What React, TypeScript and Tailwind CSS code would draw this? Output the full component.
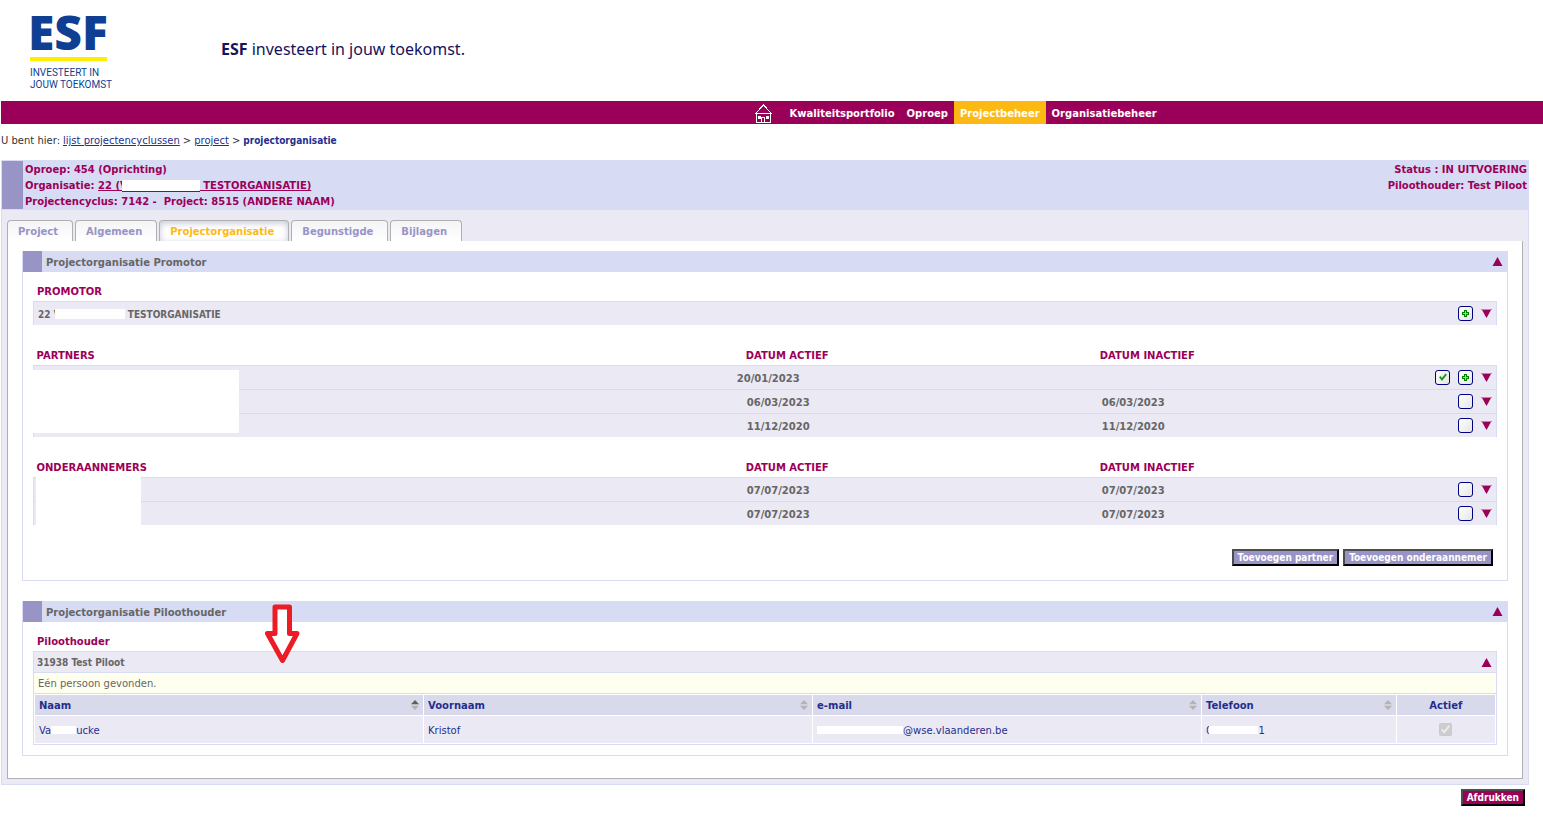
import { useState } from 'react'
import type { ReactNode } from 'react'

const navItems = ['Kwaliteitsportfolio', 'Oproep', 'Projectbeheer', 'Organisatiebeheer']
const tabs = ['Project', 'Algemeen', 'Projectorganisatie', 'Begunstigde', 'Bijlagen']

type Row = { active: string; inactive?: string; checked?: boolean; plus?: boolean; outdent?: boolean }

const partners: Row[] = [
  { active: '20/01/2023', checked: true, plus: true, outdent: true },
  { active: '06/03/2023', inactive: '06/03/2023' },
  { active: '11/12/2020', inactive: '11/12/2020' },
]

const subcontractors: Row[] = [
  { active: '07/07/2023', inactive: '07/07/2023' },
  { active: '07/07/2023', inactive: '07/07/2023' },
]

function HomeIcon() {
  return (
    <svg width="17" height="20" viewBox="0 0 17 20" fill="none" stroke="#fff" shapeRendering="crispEdges">
      <path d="M0.5 9.5 L8.5 1 L16.5 9.5 Z" />
      <path d="M1.5 10v8.5h14V10" />
      <path d="M6.5 18v-4.5h3V18" />
      <path d="M3 12h3v3H3zM11 12h3v3h-3z" fill="#fff" stroke="none" />
    </svg>
  )
}

function Triangle({ up }: { up?: boolean }) {
  return (
    <svg width="11" height="9" viewBox="0 0 11 9" className="block">
      {up ? (
        <path d="M5.5 0 L10.5 9 H0.5 Z" fill="#9b0058" />
      ) : (
        <>
          <path d="M0.5 0 H10.5 L5.5 9 Z" fill="#9b0058" />
          <path d="M0 0.5h11" stroke="#c77fab" />
        </>
      )}
    </svg>
  )
}

function ToggleButton({ up, label }: { up?: boolean; label: string }) {
  return (
    <button type="button" aria-label={label} className="cursor-pointer">
      <Triangle up={up} />
    </button>
  )
}

function IconButton({ label, children }: { label: string; children?: ReactNode }) {
  return (
    <button
      type="button"
      aria-label={label}
      className="flex h-[15px] w-[15px] items-center justify-center rounded-[3px] border border-[#000080] bg-gradient-to-br from-white to-[#e6e6e0]"
    >
      {children}
    </button>
  )
}

function PlusIcon() {
  return (
    <svg width="7" height="7" viewBox="0 0 7 7" shapeRendering="crispEdges">
      <path d="M2 0h3v2h2v3H5v2H2V5H0V2h2z" fill="#008000" />
      <path d="M3 1h1v2h2v1H4v2H3V4H1V3h2z" fill="#a5e04c" />
    </svg>
  )
}

function CheckIcon() {
  return (
    <svg width="8" height="8" viewBox="0 0 8 8">
      <path d="M0.8 3.6 L3 6.4 L7.2 1.2" fill="none" stroke="#1f9a1f" strokeWidth="1.9" />
    </svg>
  )
}

function SortIcon({ sorted }: { sorted?: boolean }) {
  return (
    <svg width="8" height="10" viewBox="0 0 8 10" className="block">
      <path d="M4 0 L8 4.2 H0 Z" fill={sorted ? '#5f6056' : '#b3b3b3'} />
      <path d="M0 5.8 H8 L4 10 Z" fill="#b3b3b3" />
    </svg>
  )
}

function ActionButton({ children, className }: { children: ReactNode; className: string }) {
  return (
    <button
      type="button"
      className={`h-[17px] border-2 border-t-[#4c4c4c] border-r-black border-b-black border-l-[#4c4c4c] px-1 font-['DejaVu_Sans_Condensed','DejaVu_Sans',sans-serif] leading-3 font-bold text-white ${className}`}
    >
      {children}
    </button>
  )
}

function Panel({ title, children }: { title: string; children: ReactNode }) {
  return (
    <section className="relative border border-[#d7dbf4] bg-white">
      <div className="-mt-px flex h-[21px] items-center bg-[#d7dbf4] pr-1">
        <div className="h-full w-[19px] bg-[#9894c6]" />
        <h2 className="flex-1 pt-0.5 pl-1 font-bold text-[#666]">{title}</h2>
        <ToggleButton up label={`${title} inklappen`} />
      </div>
      <div className="px-[10px] pt-[9px]">{children}</div>
    </section>
  )
}

function OrganisationTable({ title, rows }: { title: string; rows: Row[] }) {
  return (
    <table className="w-full table-fixed border-collapse">
      <thead>
        <tr className="h-5 text-left text-[#9b0058]">
          <th className="w-[48%] pt-0.5 pl-[3px]">{title}</th>
          <th className="w-[24.2%] pt-0.5 pl-[10px]">DATUM ACTIEF</th>
          <th className="pt-0.5 pl-[10px]">DATUM INACTIEF</th>
        </tr>
      </thead>
      <tbody className="border-x border-[#d7dbf4]">
        {rows.map((row, i) => (
          <tr key={i} className="h-6 border-t border-[#d7dbf4] bg-[#ebe9f4] font-bold text-[#666]">
            <td />
            <td className={`pt-1 ${row.outdent ? 'pl-px' : 'pl-[11px]'}`}>{row.active}</td>
            <td className="pl-3">
              <div className="flex items-center justify-between">
                <span className="pt-1">{row.inactive}</span>
                <div className="flex items-center gap-2 pr-1">
                  {row.checked && (
                    <IconButton label="Actief">
                      <CheckIcon />
                    </IconButton>
                  )}
                  <IconButton label={row.plus ? 'Toevoegen' : 'Selecteren'}>{row.plus && <PlusIcon />}</IconButton>
                  <ToggleButton label="Uitklappen" />
                </div>
              </div>
            </td>
          </tr>
        ))}
      </tbody>
    </table>
  )
}

export default function App() {
  const [activeTab, setActiveTab] = useState('Projectorganisatie')

  return (
    <div className="min-h-screen bg-white pl-px font-['DejaVu_Sans',Verdana,sans-serif] text-[10px] leading-4 text-[#333]">
      <header className="flex h-[101px] pl-[29px]">
        <div className="w-[191px] pt-3 text-[#0f3f93]">
          <div className="w-[77px] border-b-4 border-[#ffed00] pb-[6px] font-['Open_Sans',sans-serif] text-[48px] leading-[39px] font-extrabold">
            <span className="-ml-0.5">ESF</span>
          </div>
          <p className="pt-[6px] font-[Roboto,sans-serif] leading-3">
            INVESTEERT IN
            <br />
            JOUW TOEKOMST
          </p>
        </div>
        <p className="pt-[37px] font-['Noto_Sans',sans-serif] text-base leading-6 text-[#15125c]">
          <b>ESF</b> investeert in jouw toekomst.
        </p>
      </header>

      <nav className="flex h-[23px] bg-[#9b0058] pl-[49%] font-bold text-white">
        <a href="#home" aria-label="Home" className="-ml-0.5 mr-2 flex items-center pt-0.5 pr-1">
          <HomeIcon />
        </a>
        {navItems.map((item) => (
          <a
            key={item}
            href={`#${item}`}
            className={`flex items-center px-[6px] pt-0.5 ${item === 'Projectbeheer' ? 'bg-[#fdb913]' : ''}`}
          >
            {item}
          </a>
        ))}
      </nav>

      <div className="flex h-9 gap-[3px] pt-[9px]">
        <span>U bent hier:</span>
        <a href="#lijst" className="text-[#1f2f8f] underline">lijst projectencyclussen</a>
        <span>&gt;</span>
        <a href="#project" className="text-[#1f2f8f] underline">project</a>
        <span>&gt;</span>
        <b className="font-['DejaVu_Sans_Condensed','DejaVu_Sans',sans-serif] text-[#1f2f8f]">projectorganisatie</b>
      </div>

      <main className="mr-[14px]">
        <div className="border border-[#d7dbf4] bg-[#ebe9f4]">
          <div className="flex bg-[#d7dbf4] font-bold text-[#9b0058]">
            <div className="h-12 w-[21px] bg-[#9894c6]" />
            <div className="flex-1 pt-px pl-0.5">
              <p>Oproep: 454 (Oprichting)</p>
              <p className="h-4 whitespace-pre">
                Organisatie:{' '}
                <a href="#organisatie" className="underline">
                  22 (V<span className="-ml-[6px] inline-block h-3 w-[78px] border-b border-[#9b0058] bg-white align-[-3px]" /> TESTORGANISATIE)
                </a>
              </p>
              <p className="whitespace-pre">Projectencyclus: 7142 -  Project: 8515 (ANDERE NAAM)</p>
            </div>
            <div className="pt-px pr-px text-right">
              <p>Status : IN UITVOERING</p>
              <p>Piloothouder: Test Piloot</p>
            </div>
          </div>

          <div className="px-[5px] pt-[10px] pb-[5px]">
            <div role="tablist" className="flex gap-0.5">
              {tabs.map((tab) => (
                <button
                  key={tab}
                  type="button"
                  role="tab"
                  aria-selected={tab === activeTab}
                  onClick={() => setActiveTab(tab)}
                  className={`h-[21px] rounded-t-[4px] border border-b-0 border-[#b0b0b0] pt-0.5 pr-[14px] pl-[10px] font-bold ${
                    tab === activeTab
                      ? 'bg-white text-[#fdb913] shadow-[inset_0_2px_6px_#c4c6d6]'
                      : 'bg-gradient-to-b from-[#f4f4f8] to-white text-[#9894c6]'
                  }`}
                >
                  {tab}
                </button>
              ))}
            </div>

            <div className="flex flex-col gap-5 border border-t-0 border-[#b0b0b0] bg-white px-[14px] pt-[10px] pb-[22px]">
              <Panel title="Projectorganisatie Promotor">
                <h3 className="h-5 pl-1 leading-[22px] font-bold text-[#9b0058]">PROMOTOR</h3>
                <div className="flex h-6 items-center gap-2 border border-b-0 border-[#d7dbf4] bg-[#ebe9f4] pr-1 pl-1 font-bold text-[#666]">
                  <p className="flex-1 pt-0.5 font-['DejaVu_Sans_Condensed','DejaVu_Sans',sans-serif]">
                    22 V<span className="-ml-[6px] inline-block h-[10px] w-[70px] bg-white align-[-1px]" /> TESTORGANISATIE
                  </p>
                  <IconButton label="Toevoegen">
                    <PlusIcon />
                  </IconButton>
                  <ToggleButton label="Uitklappen" />
                </div>

                <div className="relative mt-5">
                  <OrganisationTable title="PARTNERS" rows={partners} />
                  <div className="absolute top-[25px] left-0 h-[63px] w-[206px] bg-white" />
                </div>

                <div className="relative mt-5">
                  <OrganisationTable title="ONDERAANNEMERS" rows={subcontractors} />
                  <div className="absolute top-5 left-[3px] h-12 w-[105px] bg-white" />
                </div>

                <div className="flex justify-end gap-1 pt-6 pr-1 pb-[14px]">
                  <ActionButton className="bg-[#9894c6]">Toevoegen partner</ActionButton>
                  <ActionButton className="bg-[#9894c6]">Toevoegen onderaannemer</ActionButton>
                </div>
              </Panel>

              <Panel title="Projectorganisatie Piloothouder">
                <h3 className="h-5 pl-1 leading-[22px] font-bold text-[#9b0058]">Piloothouder</h3>
                <div className="mb-[10px] border border-[#d7dbf4]">
                  <div className="flex h-[21px] items-center justify-between border-b border-[#d7dbf4] bg-[#ebe9f4] pr-1 pl-[3px] font-['DejaVu_Sans_Condensed','DejaVu_Sans',sans-serif] font-bold text-[#666]">
                    <span className="pt-0.5">31938 Test Piloot</span>
                    <ToggleButton up label="Inklappen" />
                  </div>
                  <p className="h-[21px] border-b border-[#d7dbf4] bg-[#fffff0] pl-1 leading-[22px] text-[#666]">
                    Eén persoon gevonden.
                  </p>
                  <table className="w-full table-fixed border-separate border-spacing-px text-[#1f2f8f]">
                    <thead>
                      <tr className="h-5 bg-[#d8d9eb] text-left">
                        {['Naam', 'Voornaam', 'e-mail', 'Telefoon'].map((column) => (
                          <th key={column} className={`px-1 ${column === 'Telefoon' ? 'w-[13.3%]' : 'w-[26.65%]'}`}>
                            <div className="flex items-center justify-between">
                              <span className="pt-0.5">{column}</span>
                              <SortIcon sorted={column === 'Naam'} />
                            </div>
                          </th>
                        ))}
                        <th className="pt-0.5 text-center">Actief</th>
                      </tr>
                    </thead>
                    <tbody>
                      <tr className="h-[27px] bg-[#ebe9f4]">
                        <td className="px-1 pt-0.5">
                          Va<span className="inline-block h-2 w-[25px] bg-white" />ucke
                        </td>
                        <td className="px-1 pt-0.5">Kristof</td>
                        <td className="px-1 pt-0.5">
                          <span className="inline-block h-2 w-[86px] bg-white" />
                          @wse.vlaanderen.be
                        </td>
                        <td className="px-1 pt-0.5">
                          0<span className="-ml-[3px] inline-block h-2 w-[49px] bg-white" />1
                        </td>
                        <td>
                          <input
                            type="checkbox"
                            aria-label="Actief"
                            defaultChecked
                            disabled
                            className="mx-auto block h-[13px] w-[13px]"
                          />
                        </td>
                      </tr>
                    </tbody>
                  </table>
                </div>
                <svg
                  className="pointer-events-none absolute top-px left-[242px]"
                  width="36"
                  height="62"
                  viewBox="0 0 36 62"
                  aria-hidden="true"
                >
                  <path
                    d="M10 4 H24.5 V30.5 H32 L17.5 57.5 L2.5 30.5 H10 Z"
                    fill="#fff"
                    stroke="#ed1c24"
                    strokeWidth="5"
                    strokeLinejoin="round"
                  />
                </svg>
              </Panel>
            </div>
          </div>
        </div>
        <div className="flex justify-end pt-1 pr-1">
          <ActionButton className="bg-[#9b0058]">Afdrukken</ActionButton>
        </div>
      </main>
    </div>
  )
}
